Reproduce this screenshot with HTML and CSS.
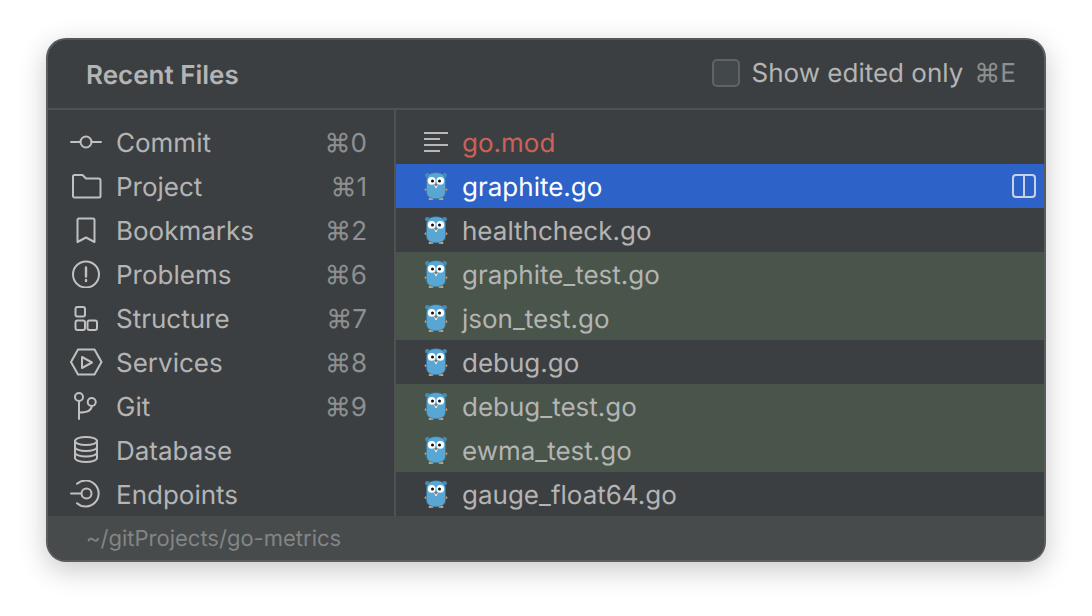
FILE: index.html
```html
<!DOCTYPE html>
<html lang="en">
<head>
<meta charset="utf-8">
<title>Recent Files</title>
<link rel="stylesheet" href="styles.css">
</head>
<body>
<svg class="defs" width="0" height="0" aria-hidden="true">
  <defs>
    <symbol id="gopher" viewBox="0 0 26 32">
      <circle cx="3.400" cy="5.200" r="2.300" fill="#4a8db0"/>
      <circle cx="20.600" cy="5.200" r="2.300" fill="#4a8db0"/>
      <path d="M2.500 18l-2 1 .5 2 2-.5zM21.500 18l2 1-.5 2-2-.5z" fill="#c99a72"/>
      <path d="M7.500 27l-3 1.500 .5 1.500 4-.3 1-1.700zM16.500 27l3 1.500-.5 1.500-4-.3-1-1.700z" fill="#d2a57c"/>
      <path d="M12 2.700c6.200 0 9.500 3 9.500 8v11c0 4.800-3.500 7-9.500 7s-9.500-2.200-9.500-7v-11c0-5 3.300-8 9.500-8z" fill="#58a6d3" stroke="#37749a" stroke-width=".6"/>
      <circle cx="7.700" cy="10.800" r="3.900" fill="#fff"/>
      <circle cx="16.300" cy="10.800" r="3.900" fill="#fff"/>
      <circle cx="8.500" cy="11" r="1.500" fill="#111"/>
      <circle cx="15.500" cy="11" r="1.500" fill="#111"/>
      <ellipse cx="12" cy="15.600" rx="2.100" ry="1.300" fill="#e6c8a8"/>
      <ellipse cx="12" cy="14.900" rx=".9" ry=".6" fill="#222"/>
      <rect x="11.300" y="16.500" width="1.400" height="1.600" fill="#fff"/>
    </symbol>
  </defs>
</svg>
<main class="popup">
  <header class="head">
    <h1 class="title">Recent Files</h1>
    <div class="filter">
      <span class="check"></span>
      <span class="filter-label">Show edited only</span>
      <span class="shortcut">⌘E</span>
    </div>
  </header>
  <div class="body">
    <nav class="tools">
      <div class="tool">
        <svg class="ticon" viewBox="0 0 34 28"><path d="M1 14h9.500M21.500 14H31"/><circle cx="16" cy="14" r="5.500"/></svg>
        <span class="tname">Commit</span><span class="shortcut">⌘0</span>
      </div>
      <div class="tool">
        <svg class="ticon" viewBox="0 0 34 28"><path d="M3 4.500a1.500 1.500 0 0 1 1.500-1.500h8l3.500 3.500h12.500a2 2 0 0 1 2 2v15.500a1.500 1.500 0 0 1-1.500 1.500H4.500A1.500 1.500 0 0 1 3 24.500z"/></svg>
        <span class="tname">Project</span><span class="shortcut">⌘1</span>
      </div>
      <div class="tool">
        <svg class="ticon" viewBox="0 0 34 28"><path d="M7.500 4a1.500 1.500 0 0 1 1.500-1.500h14a1.500 1.500 0 0 1 1.500 1.500v22L16 21.500 7.500 26z"/></svg>
        <span class="tname">Bookmarks</span><span class="shortcut">⌘2</span>
      </div>
      <div class="tool">
        <svg class="ticon" viewBox="0 0 34 28"><circle cx="16" cy="14.500" r="13"/><path d="M16 7.500v9M16 20v1" stroke-width="2.400"/></svg>
        <span class="tname">Problems</span><span class="shortcut">⌘6</span>
      </div>
      <div class="tool">
        <svg class="ticon" viewBox="0 0 34 28"><rect x="5.500" y="3" width="9.500" height="9.500" rx="2"/><rect x="5.500" y="16.500" width="9.500" height="9.500" rx="2"/><rect x="17.500" y="16.500" width="9.500" height="9.500" rx="2"/></svg>
        <span class="tname">Structure</span><span class="shortcut">⌘7</span>
      </div>
      <div class="tool">
        <svg class="ticon" viewBox="0 0 34 28"><path d="M8 1.500h16.500l7 12.500-7 12.500H8L1 14z"/><path d="M12 9v11l10-5.500z"/></svg>
        <span class="tname">Services</span><span class="shortcut">⌘8</span>
      </div>
      <div class="tool">
        <svg class="ticon" viewBox="0 0 34 28"><circle cx="9" cy="5" r="4"/><circle cx="21.700" cy="10" r="4"/><path d="M9 9v18M9 20.500c7 0 12.700-1 12.700-6.500"/></svg>
        <span class="tname">Git</span><span class="shortcut">⌘9</span>
      </div>
      <div class="tool">
        <svg class="ticon" viewBox="0 0 34 28"><ellipse cx="16" cy="5" rx="11" ry="4"/><path d="M5 5v17c0 2.200 5 4 11 4s11-1.800 11-4V5M5 11c0 2.200 5 4 11 4s11-1.800 11-4M5 16.500c0 2.200 5 4 11 4s11-1.800 11-4"/></svg>
        <span class="tname">Database</span><span class="shortcut"></span>
      </div>
      <div class="tool">
        <svg class="ticon" viewBox="0 0 34 28"><path d="M1 13.500h10"/><circle cx="16.500" cy="13.500" r="5"/><path d="M7 3.800A13 13 0 1 1 7 23.200"/></svg>
        <span class="tname">Endpoints</span><span class="shortcut"></span>
      </div>
    </nav>
    <ul class="files">
      <li class="file file-mod">
        <svg class="ficon lines" viewBox="0 0 26 22"><path d="M0 2h24M0 8h16M0 14h24M0 20h16"/></svg>
        <span>go.mod</span>
      </li>
      <li class="file selected">
        <svg class="ficon"><use href="#gopher"/></svg>
        <span>graphite.go</span>
        <svg class="split" viewBox="0 0 24 24"><rect x="1" y="1" width="22" height="22" rx="3"/><path d="M12 1v22"/></svg>
      </li>
      <li class="file"><svg class="ficon"><use href="#gopher"/></svg><span>healthcheck.go</span></li>
      <li class="file test"><svg class="ficon"><use href="#gopher"/></svg><span>graphite_test.go</span></li>
      <li class="file test"><svg class="ficon"><use href="#gopher"/></svg><span>json_test.go</span></li>
      <li class="file"><svg class="ficon"><use href="#gopher"/></svg><span>debug.go</span></li>
      <li class="file test"><svg class="ficon"><use href="#gopher"/></svg><span>debug_test.go</span></li>
      <li class="file test"><svg class="ficon"><use href="#gopher"/></svg><span>ewma_test.go</span></li>
      <li class="file"><svg class="ficon"><use href="#gopher"/></svg><span>gauge_float64.go</span></li>
    </ul>
  </div>
  <footer class="foot">~/gitProjects/go-metrics</footer>
</main>
</body>
</html>
```
FILE: styles.css
```css
* { box-sizing: border-box; }
html, body { margin: 0; height: 100%; }
body {
  background: #fff;
  font-family: Inter, "Liberation Sans", sans-serif;
  font-size: 26px;
  color: #b4b4b4;
  padding: 38px 46px 54px;
  overflow: hidden;
  text-rendering: geometricPrecision;
}
.defs { position: absolute; }
.popup {
  width: 1000px;
  height: 524px;
  background: #3c3f41;
  border: 2px solid #5a5c5e;
  border-top-color: #55585a;
  border-radius: 20px;
  display: flex;
  flex-direction: column;
  overflow: hidden;
  box-shadow: 0 8px 28px rgba(0, 0, 0, .22);
}
.head {
  height: 70px;
  flex: none;
  display: flex;
  align-items: center;
  justify-content: space-between;
  padding: 0 28px 0 38px;
  border-bottom: 2px solid #4f5153;
}
.title { margin: 2px 0 0; font-size: 26px; font-weight: 600; color: #b4b4b4; }
.filter { display: flex; align-items: center; margin-top: -3px; }
.check {
  width: 28px; height: 28px;
  background: #43484a;
  border: 2px solid #606366;
  border-radius: 5px;
  margin-right: 12px;
}
.filter-label { margin-right: 11px; }
.shortcut { color: #8d8f90; }
.filter-label, .filter .shortcut, .tname, .tool .shortcut, .file span { padding-top: 2px; }
.body { flex: 1; display: flex; min-height: 0; padding-top: 10px; }
.tools {
  width: 348px;
  flex: none;
  margin-top: -10px;
  padding: 10px 27px 0 22px;
  border-right: 2px solid #4f5153;
}
.tool { height: 44px; display: flex; align-items: center; }
.ticon {
  width: 34px; height: 28px;
  margin-right: 12px;
  flex: none;
  fill: none;
  stroke: #c0c0c0;
  stroke-width: 2;
  stroke-linecap: round;
  stroke-linejoin: round;
}
.tname { flex: 1; }
.files { flex: 1; margin: 0; padding: 0; list-style: none; }
.file { height: 44px; display: flex; align-items: center; padding-left: 28px; }
.file-mod { color: #cc6158; }
.selected { background: #2d63c8; color: #fff; }
.test { background: #49544a; }
.ficon { width: 26px; height: 32px; margin-right: 12px; flex: none; }
.lines { height: 22px; fill: none; stroke: #b8b8b8; stroke-width: 2; }
.split {
  width: 24px; height: 24px;
  margin-left: auto;
  margin-right: 8px;
  fill: none;
  stroke: #c8d2e6;
  stroke-width: 2;
}
.foot {
  height: 44px;
  flex: none;
  background: #484b4c;
  color: #828586;
  font-size: 22px;
  display: flex;
  align-items: center;
  padding: 1px 0 0 38px;
}
```
